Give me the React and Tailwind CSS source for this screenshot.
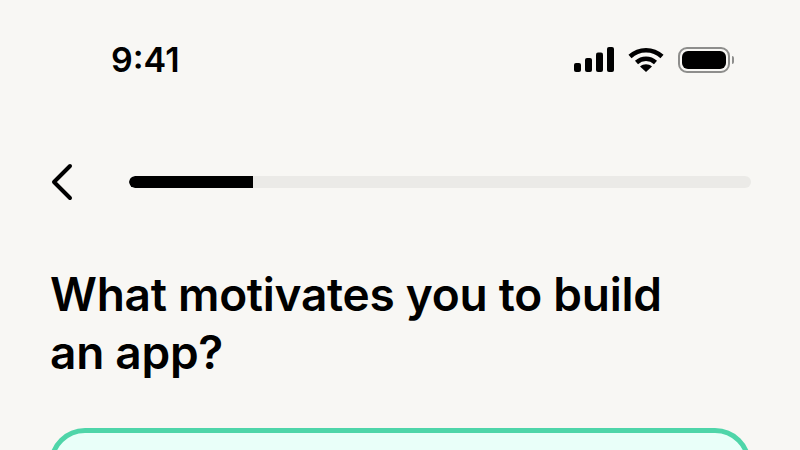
import React from "react";

function StatusIcons() {
    return (
        <div className="flex items-center gap-[14px]">
            <svg width="40" height="26" viewBox="0 0 40 26" fill="#000">
                <rect x="0" y="16" width="7" height="9" rx="2" />
                <rect x="11" y="11" width="7" height="14" rx="2" />
                <rect x="22" y="5.500" width="7" height="19.500" rx="2" />
                <rect x="33" y="0" width="7" height="25" rx="2" />
            </svg>
            <svg width="36" height="26" viewBox="0 0 36 26" fill="none" stroke="#000" strokeWidth="4.500">
                <path d="M2 9.500C11 1 25 1 34 9.500" />
                <path d="M8.500 15.500C14 10.500 22 10.500 27.500 15.500" />
                <path d="M18 25L12 19.500C15.500 16.500 20.500 16.500 24 19.500Z" fill="#000" stroke="none" />
            </svg>
            <div className="flex items-center gap-[2px]">
                <div className="w-[52px] h-[26px] rounded-[9px] border-2 border-[#8e8e8c] p-[2px]">
                    <div className="w-full h-full rounded-[6px] bg-black" />
                </div>
                <div className="w-[2px] h-[8px] rounded-r-full bg-[#8e8e8c]" />
            </div>
        </div>
    );
}

export default function App() {
    return (
        <div className="w-[800px] h-[450px] overflow-hidden bg-[#f8f7f4] font-['Inter',sans-serif] text-black">
            <div className="flex items-center justify-between h-[40px] mt-[40px] pl-[111px] pr-[66px]">
                <span className="text-[34px] leading-[40px] font-semibold">9:41</span>
                <StatusIcons />
            </div>

            <div className="flex items-center gap-[56px] mt-[83px] pl-[50px] pr-[49px]">
                <svg width="23" height="38" viewBox="0 0 23 38" fill="none" stroke="#000" strokeWidth="4" strokeLinecap="round" strokeLinejoin="round">
                    <path d="M20 3L4 19L20 35" />
                </svg>
                <div className="flex-1 h-[12px] rounded-full bg-[#ebeae7] overflow-hidden">
                    <div className="w-1/5 h-full rounded-l-full bg-black" />
                </div>
            </div>

            <h1 className="mt-[64px] px-[50px] text-[46px] leading-[58px] font-semibold tracking-[-0.27px]">
                What motivates you to build
                <br />
                an app?
            </h1>

            <div className="mt-[47px] mx-[49px] h-[120px] rounded-[36px] border-[5px] border-[#4fd5a9] bg-[#e9fff9]" />
        </div>
    );
}
